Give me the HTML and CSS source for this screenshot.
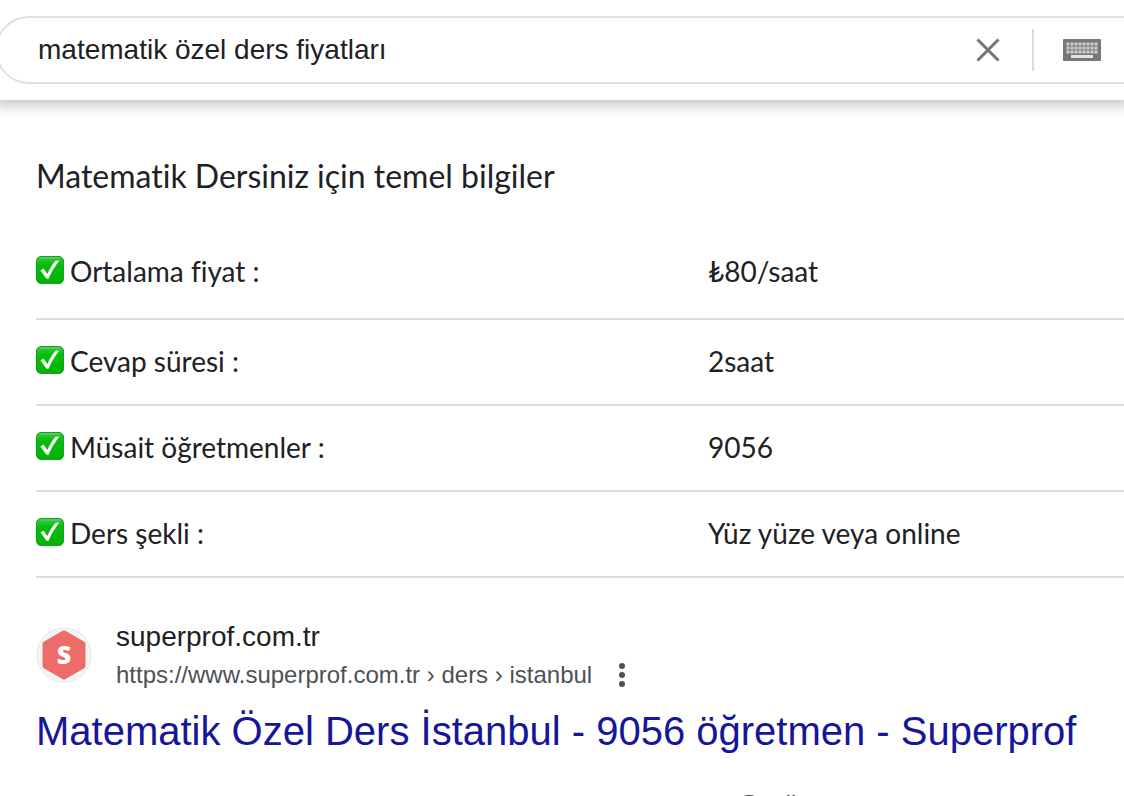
FILE: index.html
```html
<!DOCTYPE html>
<html lang="tr">
<head>
  <meta charset="UTF-8" />
  <meta name="viewport" content="width=device-width, initial-scale=1.0"/>
  <title>matematik özel ders fiyatları</title>
  <link rel="stylesheet" href="styles.css">
</head>
<body>
  <svg class="sprite" aria-hidden="true">
    <linearGradient id="green" x1="0" y1="0" x2="0" y2="1">
      <stop offset="0" stop-color="#3fc94a"/>
      <stop offset="0.3" stop-color="#08bd0c"/>
      <stop offset="1" stop-color="#00b400"/>
    </linearGradient>
    <symbol id="check" viewBox="0 0 28 28">
      <rect x="0.5" y="0.5" width="27" height="27" rx="4.5" fill="url(#green)" stroke="#1c9a2a"/>
      <path d="M4 2H24" stroke="#6ad472" stroke-width="1" stroke-linecap="round"/>
      <path d="M4.5 14.4L7.4 12.6L11.4 18C13.6 12.6 17 7.6 20 4.6L23.2 4.8C18.8 10.4 15.2 16.4 12.6 22.8H10.4Z" fill="#fff"/>
    </symbol>
  </svg>

  <header class="topbar">
    <form class="search">
      <input type="text" class="search-input" aria-label="Ara" value="matematik özel ders fiyatları">
      <button type="button" class="clear" aria-label="Temizle">
        <svg width="24" height="24" viewBox="0 0 24 24"><path d="M1.5 1.5L22.5 22.5M22.5 1.5L1.5 22.5" stroke="#70757a" stroke-width="3" fill="none"/></svg>
      </button>
      <button type="button" class="keyboard" aria-label="Klavye">
        <svg width="38" height="22" viewBox="0 0 38 22">
          <rect width="38" height="22" rx="1" fill="#77787a"/>
          <path d="M3.5 5H35M3.5 9H35M3.5 13H35" stroke="#cfcfcf" stroke-width="3" stroke-dasharray="3 1"/>
          <path d="M8 17.5H30" stroke="#e4e4e4" stroke-width="3"/>
        </svg>
      </button>
    </form>
  </header>

  <main>
    <h2 class="facts-title">Matematik Dersiniz için temel bilgiler</h2>
    <table class="facts">
      <tr>
        <th scope="row"><svg class="check"><use href="#check"/></svg>Ortalama fiyat :</th>
        <td>₺80/saat</td>
      </tr>
      <tr>
        <th scope="row"><svg class="check"><use href="#check"/></svg>Cevap süresi :</th>
        <td>2saat</td>
      </tr>
      <tr>
        <th scope="row"><svg class="check"><use href="#check"/></svg>Müsait öğretmenler :</th>
        <td>9056</td>
      </tr>
      <tr>
        <th scope="row"><svg class="check"><use href="#check"/></svg>Ders şekli :</th>
        <td>Yüz yüze veya online</td>
      </tr>
    </table>

    <div class="result">
      <div class="source">
        <svg class="favicon" viewBox="0 0 56 56">
          <circle cx="28" cy="28" r="27" fill="#f3f5f6" stroke="#e3e6e9"/>
          <path d="M28 6L47 17V39L28 50L9 39V17Z" fill="#ee6c68" stroke="#ee6c68" stroke-width="5" stroke-linejoin="round"/>
          <text x="28" y="37" class="favicon-letter">S</text>
        </svg>
        <div>
          <div class="site">superprof.com.tr</div>
          <div class="crumbs">
            <cite>https://www.superprof.com.tr › ders › istanbul</cite>
            <button type="button" class="more" aria-label="Bu sonuç hakkında">
              <svg width="8" height="24" viewBox="0 0 8 24" fill="#4d5156"><circle cx="4" cy="3" r="3"/><circle cx="4" cy="12" r="3"/><circle cx="4" cy="21" r="3"/></svg>
            </button>
          </div>
        </div>
      </div>
      <h3><a href="#">Matematik Özel Ders İstanbul - 9056 öğretmen - Superprof</a></h3>
      <p class="snippet">Ge ü</p>
    </div>
  </main>
</body>
</html>
```
FILE: styles.css
```css
* {
  margin: 0;
  padding: 0;
  box-sizing: border-box;
}

body {
  background: #fff;
  color: #202124;
  font-family: "Liberation Sans", Arial, sans-serif;
  overflow: hidden;
}

button {
  display: flex;
  background: none;
  border: none;
  cursor: pointer;
}

.sprite {
  position: absolute;
  width: 0;
  height: 0;
}

.topbar {
  padding: 16px 0;
  box-shadow: 0 0 12px 6px rgba(0, 0, 0, 0.22);
}

.search {
  display: flex;
  align-items: center;
  height: 68px;
  margin-left: -5px;
  padding: 0 23px 0 41px;
  border: 2px solid #dfe1e5;
  border-right: none;
  border-radius: 34px 0 0 34px;
}

.search-input {
  flex: 1;
  min-width: 0;
  border: none;
  outline: none;
  background: none;
  color: #202124;
  font-family: inherit;
  font-size: 28px;
}

.clear {
  padding: 0 32px;
}

.keyboard {
  align-items: center;
  height: 42px;
  padding-left: 29px;
  border-left: 2px solid #dadce0;
}

main {
  padding-left: 36px;
}

.facts-title {
  margin-top: 56px;
  font-family: Lato, sans-serif;
  font-size: 32px;
  font-weight: 400;
  font-variant-ligatures: no-common-ligatures;
  line-height: 40px;
}

.facts {
  width: 100%;
  margin-top: 34px;
  border-spacing: 0;
  font-family: Lato, sans-serif;
  font-size: 28px;
  line-height: 32px;
}

.facts th,
.facts td {
  height: 86px;
  padding-bottom: 2px;
  border-bottom: 2px solid #dadce0;
  font-weight: 400;
  text-align: left;
}

.facts tr:first-child th,
.facts tr:first-child td {
  height: 90px;
  padding-bottom: 6px;
}

.facts th {
  width: 672px;
}

.check {
  width: 28px;
  height: 28px;
  margin-right: 6px;
  vertical-align: -2px;
}

.result {
  margin-top: 39px;
}

.source {
  display: flex;
  align-items: center;
  gap: 24px;
}

.favicon {
  width: 56px;
  height: 56px;
}

.favicon-letter {
  fill: #fff;
  font-family: "Open Sans", sans-serif;
  font-size: 25px;
  font-weight: 800;
  text-anchor: middle;
}

.site {
  font-size: 28px;
  line-height: 40px;
}

.crumbs {
  display: flex;
  align-items: center;
  gap: 26px;
  color: #4d5156;
  font-size: 24px;
  line-height: 36px;
}

.crumbs cite {
  font-style: normal;
}

h3 {
  margin-top: 12px;
  font-size: 40px;
  font-weight: 400;
  line-height: 52px;
  white-space: nowrap;
}

h3 a {
  color: #16169a;
  text-decoration: none;
}

.snippet {
  margin-top: 30px;
  padding-left: 702px;
  color: #4d5156;
  font-size: 28px;
  line-height: 36px;
}
```
